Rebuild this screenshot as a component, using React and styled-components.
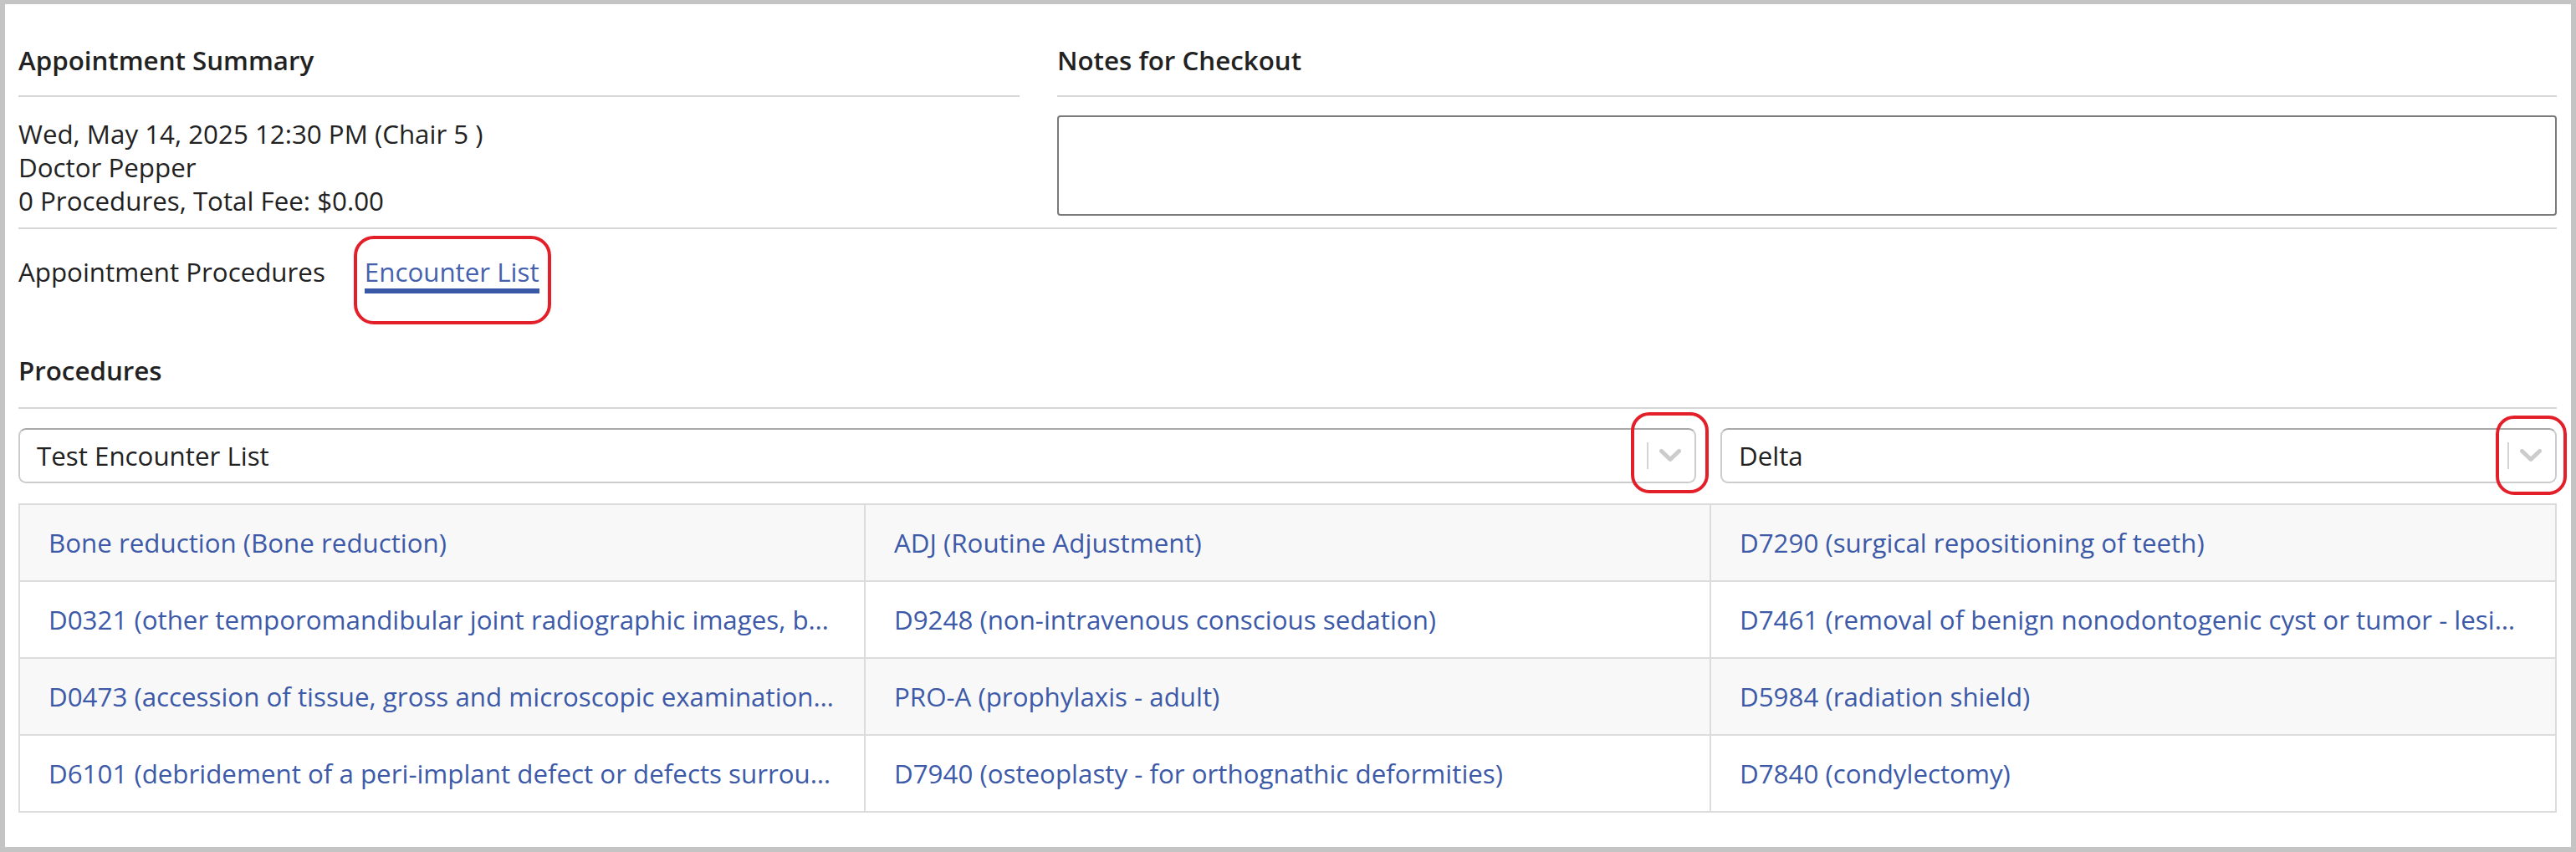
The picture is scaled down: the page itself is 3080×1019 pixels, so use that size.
import React from 'react';
import styled, { createGlobalStyle } from 'styled-components';

const GlobalStyle = createGlobalStyle`
  html, body {
    margin: 0;
    padding: 0;
    background: #ffffff;
  }
  * {
    box-sizing: border-box;
  }
`;

const StyledFrame = styled.div`
  width: 100vw;
  height: 100vh;
  border: 6px solid #c4c4c4;
  border-top-width: 5px;
  background: #ffffff;
  padding: 0 17px 0 16px;
  font-family: 'Open Sans', 'Noto Sans', sans-serif;
  font-size: 31.3px;
  line-height: 40px;
  color: #222222;
  overflow: hidden;
`;

const StyledTopRow = styled.div`
  display: grid;
  grid-template-columns: 1197px 1fr;
  column-gap: 45px;
  align-items: start;
  padding-bottom: 12px;
  border-bottom: 2px solid #d6d6d6;
`;

const StyledSectionTitle = styled.h3`
  margin: ${({ top }) => top || 0}px 0 0;
  padding-bottom: 22px;
  border-bottom: 2px solid #d6d6d6;
  font-size: 31.3px;
  line-height: 40px;
  font-weight: 600;
  color: #222222;
`;

const StyledSummaryLines = styled.div`
  margin-top: 24px;
  display: flex;
  flex-direction: column;
`;

const StyledNotes = styled.textarea`
  display: block;
  width: 100%;
  height: 120px;
  margin-top: 22px;
  border: 2px solid #7a7a7a;
  border-radius: 4px;
  resize: none;
  font: inherit;
`;

const StyledTabs = styled.div`
  display: flex;
  align-items: flex-start;
  gap: 47px;
  margin-top: 31px;
`;

const StyledTabLabel = styled.span`
  color: #222222;
`;

const StyledTabLink = styled.a`
  position: relative;
  display: inline-block;
  line-height: 40px;
  color: #4561ad;
  text-decoration: none;
  border-bottom: 6px solid #3a58a8;
  cursor: pointer;

  &::after {
    content: '';
    position: absolute;
    top: -23px;
    left: -13px;
    right: -14px;
    bottom: -43px;
    border: 4px solid #e3202a;
    border-radius: 24px;
    pointer-events: none;
  }
`;

const StyledProceduresTitle = styled(StyledSectionTitle)`
  margin-top: 72px;
  padding-bottom: 24px;
`;

const StyledSelectRow = styled.div`
  display: grid;
  grid-template-columns: 2006px 1fr;
  column-gap: 29px;
  margin-top: 23px;
`;

const StyledSelect = styled.div`
  position: relative;
  height: 66px;
  display: flex;
  align-items: center;
  border: 2px solid #cccccc;
  border-top-color: #a9a9a9;
  border-radius: 9px;
  padding-left: 20px;
  background: #ffffff;
`;

const StyledSelectValue = styled.span`
  flex: 1;
  color: #222222;
`;

const StyledIndicator = styled.div`
  position: relative;
  width: 57px;
  height: 100%;
  display: flex;
  align-items: center;
  justify-content: space-between;
  padding-right: 16px;

  &::after {
    content: '';
    position: absolute;
    top: ${({ ring }) => ring.top}px;
    bottom: ${({ ring }) => ring.bottom}px;
    left: ${({ ring }) => ring.left}px;
    right: ${({ ring }) => ring.right}px;
    border: 4px solid #e3202a;
    border-radius: 22px;
    pointer-events: none;
  }
`;

const StyledSeparator = styled.span`
  width: 2px;
  height: 32px;
  background: #d4d4d4;
`;

const StyledTable = styled.div`
  margin-top: 24px;
  display: grid;
  grid-template-columns: repeat(3, 1fr);
  border-top: 2px solid #dcdcdc;
  border-left: 2px solid #dcdcdc;
`;

const StyledCell = styled.div`
  height: 92px;
  display: flex;
  align-items: center;
  padding: 0 35px 0 34px;
  min-width: 0;
  background: ${({ striped }) => (striped ? '#f8f8f8' : '#ffffff')};
  border-right: 2px solid #dcdcdc;
  border-bottom: 2px solid #dcdcdc;
`;

const StyledProcLink = styled.a`
  color: #3d5aa8;
  line-height: 48px;
  text-decoration: none;
  white-space: nowrap;
  overflow: hidden;
  text-overflow: ellipsis;
  cursor: pointer;
`;

function Chevron() {
  return (
    <svg width="26" height="16" viewBox="0 0 26 16">
      <path
        d="M2.5 2.5 L13 12.5 L23.5 2.5"
        fill="none"
        stroke="#cccccc"
        strokeWidth="5"
        strokeLinecap="round"
        strokeLinejoin="round"
      />
    </svg>
  );
}

const procedures = [
  'Bone reduction (Bone reduction)',
  'ADJ (Routine Adjustment)',
  'D7290 (surgical repositioning of teeth)',
  'D0321 (other temporomandibular joint radiographic images, by report)',
  'D9248 (non-intravenous conscious sedation)',
  'D7461 (removal of benign nonodontogenic cyst or tumor - lesion diameter greater than 1.25 cm)',
  'D0473 (accession of tissue, gross and microscopic examination, preparation and transmission of written report)',
  'PRO-A (prophylaxis - adult)',
  'D5984 (radiation shield)',
  'D6101 (debridement of a peri-implant defect or defects surrounding a single implant)',
  'D7940 (osteoplasty - for orthognathic deformities)',
  'D7840 (condylectomy)',
];

function App() {
  return (
    <>
      <GlobalStyle />
      <StyledFrame>
        <StyledTopRow>
          <div>
            <StyledSectionTitle top={47}>Appointment Summary</StyledSectionTitle>
            <StyledSummaryLines>
              <span>Wed, May 14, 2025 12:30 PM (Chair 5 )</span>
              <span>Doctor Pepper</span>
              <span>0 Procedures, Total Fee: $0.00</span>
            </StyledSummaryLines>
          </div>
          <div>
            <StyledSectionTitle top={47}>Notes for Checkout</StyledSectionTitle>
            <StyledNotes />
          </div>
        </StyledTopRow>

        <StyledTabs>
          <StyledTabLabel>Appointment Procedures</StyledTabLabel>
          <StyledTabLink>Encounter List</StyledTabLink>
        </StyledTabs>

        <StyledProceduresTitle>Procedures</StyledProceduresTitle>

        <StyledSelectRow>
          <StyledSelect>
            <StyledSelectValue>Test Encounter List</StyledSelectValue>
            <StyledIndicator ring={{ top: -21, bottom: -14, left: -19, right: -17 }}>
              <StyledSeparator />
              <Chevron />
            </StyledIndicator>
          </StyledSelect>
          <StyledSelect>
            <StyledSelectValue>Delta</StyledSelectValue>
            <StyledIndicator ring={{ top: -17, bottom: -16, left: -14, right: -14 }}>
              <StyledSeparator />
              <Chevron />
            </StyledIndicator>
          </StyledSelect>
        </StyledSelectRow>

        <StyledTable>
          {procedures.map((item, i) => (
            <StyledCell key={item} striped={Math.floor(i / 3) % 2 === 0}>
              <StyledProcLink>{item}</StyledProcLink>
            </StyledCell>
          ))}
        </StyledTable>
      </StyledFrame>
    </>
  );
}

export default App;
